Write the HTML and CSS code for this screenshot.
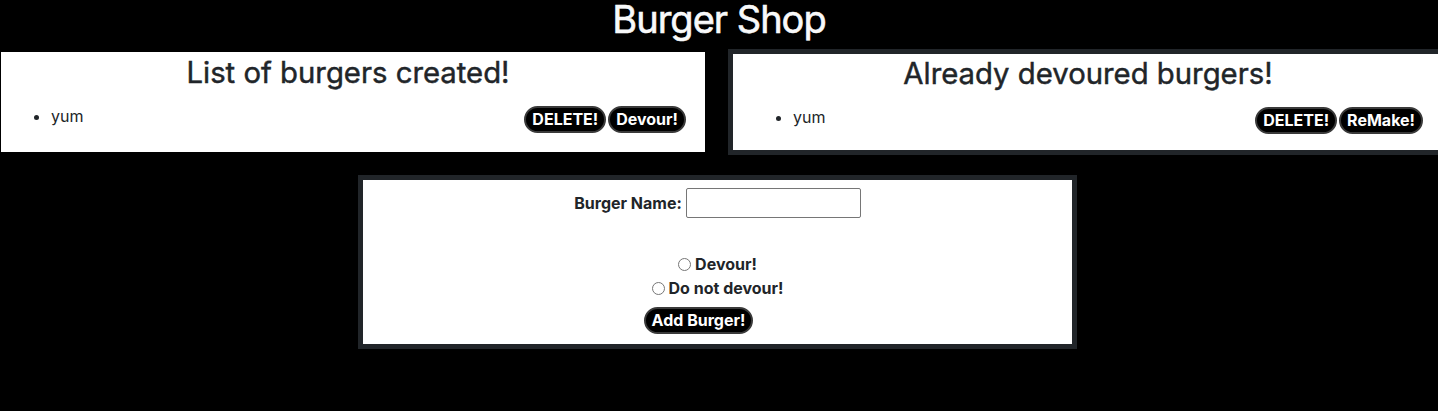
FILE: index.html
```html
<!DOCTYPE html>
<html lang="en">
<head>
<meta charset="utf-8">
<title>Burger Shop</title>
<link rel="stylesheet" href="styles.css">
</head>
<body>
<h1 class="title">Burger Shop</h1>
<div class="lists">
  <section class="card card-left">
    <h2 class="card-title">List of burgers created!</h2>
    <ul class="burgers">
      <li class="burger">
        <span class="actions">
          <button class="pill">DELETE!</button><button class="pill">Devour!</button>
        </span>
        yum
      </li>
    </ul>
  </section>
  <section class="card card-right">
    <h2 class="card-title">Already devoured burgers!</h2>
    <ul class="burgers">
      <li class="burger">
        <span class="actions">
          <button class="pill">DELETE!</button><button class="pill">ReMake!</button>
        </span>
        yum
      </li>
    </ul>
  </section>
</div>
<form class="card form-card">
  <div class="name-row">
    <label class="label" for="burger">Burger Name:</label>
    <input class="name-input" id="burger" type="text">
  </div>
  <div class="radio-row first">
    <input type="radio" name="devoured" id="dev"><label class="label" for="dev">Devour!</label>
  </div>
  <div class="radio-row">
    <input type="radio" name="devoured" id="notdev"><label class="label" for="notdev">Do not devour!</label>
  </div>
  <div class="submit-row">
    <button class="pill add" type="button">Add Burger!</button>
  </div>
</form>
</body>
</html>
```
FILE: styles.css
```css
html, body {
  margin: 0;
  background: #000;
  overflow-x: hidden;
}
body {
  font-family: Inter, "Noto Sans", sans-serif;
  color: #212529;
  font-size: 16px;
  line-height: 1.5;
}
.title {
  margin: 0;
  text-align: center;
  color: #f8f9fa;
  font-size: 38px;
  font-weight: 400;
  -webkit-text-stroke: 0.6px #f8f9fa;
  letter-spacing: -1px;
  line-height: 38px;
  height: 48px;
}
.lists {
  display: flex;
  align-items: flex-start;
}
.card {
  background: #fff;
  box-sizing: border-box;
}
.card-left {
  margin-left: 1px;
  margin-top: 4px;
  width: 704px;
  height: 100px;
  flex-shrink: 0;
  padding: 2px 18px 0 0;
}
.card-right {
  margin-left: 23px;
  margin-top: 1px;
  width: 720px;
  height: 106px;
  flex-shrink: 0;
  border: 5px solid #212529;
  padding: 1px 19px 0 0;
}
.card-title {
  margin: 0 0 12px;
  text-align: center;
  font-size: 29.3px;
  font-weight: 400;
  -webkit-text-stroke: 0.45px #212529;
  line-height: 38px;
  padding-left: 8px;
}
.card-right .card-title {
  padding-left: 19px;
}
.burgers {
  margin: 0;
  padding-left: 50px;
}
.card-right .burgers {
  padding-left: 60px;
}
.burger {
  line-height: 24px;
}
.actions {
  float: right;
  display: flex;
  margin-top: 2px;
}
.pill {
  font-family: Inter, "Noto Sans", sans-serif;
  font-weight: 700;
  font-size: 16px;
  line-height: 19px;
  color: #fff;
  background: #000;
  border: 2px solid #3a3a3a;
  border-radius: 14px;
  padding: 2px 6px;
  margin: 0 1px;
  cursor: pointer;
}
.form-card {
  width: 719px;
  height: 174px;
  margin: 20px 0 0 358px;
  border: 5px solid #212529;
  padding-top: 8px;
}
.name-row {
  display: flex;
  justify-content: center;
  align-items: center;
  gap: 4px;
}
.label {
  font-weight: 700;
  font-size: 16px;
}
.name-input {
  width: 175px;
  height: 30px;
  box-sizing: border-box;
  border: 1px solid #767676;
  border-radius: 2px;
  margin: 0;
}
.radio-row {
  display: flex;
  justify-content: center;
  align-items: center;
  height: 24px;
}
.radio-row.first {
  margin-top: 34px;
}
.radio-row input {
  margin: 0 4px 0 0;
  width: 13px;
  height: 13px;
}
.submit-row {
  display: flex;
  justify-content: center;
  margin-top: 7px;
  padding-right: 38px;
}
.add {
  margin: 0;
}
```
